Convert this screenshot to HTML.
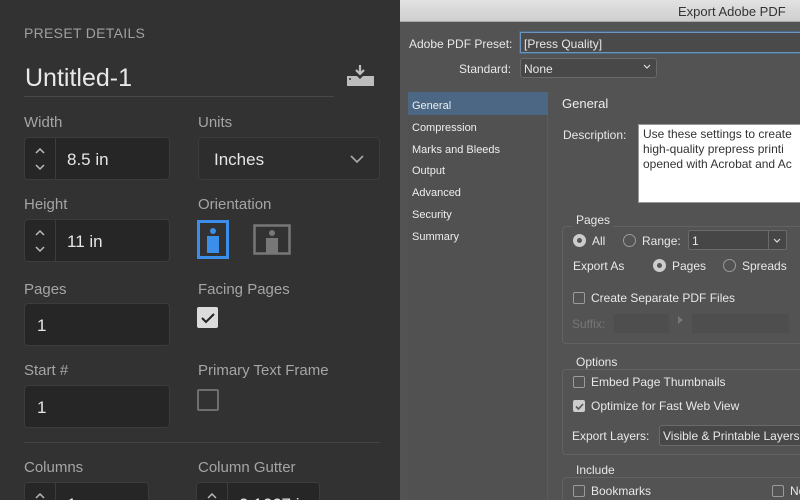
<!DOCTYPE html>
<html><head><style>
*{margin:0;padding:0;box-sizing:border-box}
html{width:800px;height:500px;overflow:hidden}
body{width:800px;height:500px;overflow:hidden;position:relative;background:#535353;font-family:"Liberation Sans",sans-serif}
.a{position:absolute;white-space:nowrap}
#L{position:absolute;left:0;top:0;width:400px;height:500px;background:#323232;overflow:hidden}
.lab{position:absolute;color:#a5a5a5;font-size:15px}
.box{position:absolute;background:#262626;border:1px solid #3c3c3c;border-radius:4px;color:#e6e6e6;font-size:17px}
.step{position:absolute;left:0;top:0;bottom:0;width:31px;border-right:1px solid #3c3c3c;color:#bbb}
.r{color:#e8e8e8;font-size:12px}
.cb{position:absolute;width:12px;height:12px;border:1px solid #9a9a9a;border-radius:2px;background:#535353}
.rd{position:absolute;width:13px;height:13px;border:1px solid #9a9a9a;border-radius:50%}
.rd.on{background:#ccc;border-color:#ccc}
.rd.on:after{content:"";position:absolute;left:3px;top:3px;width:5px;height:5px;border-radius:50%;background:#555}
.grp{position:absolute;border:1px solid #626262;border-radius:4px}
.leg{position:absolute;background:#535353;padding:0 3px;color:#e8e8e8;font-size:12px}
#R{position:absolute;left:400px;top:0;width:400px;height:500px;overflow:hidden}
</style></head><body>
<div id="L">
<div class="a" style="left:24px;top:25px;font-size:14px;color:#a0a0a0;letter-spacing:0.3px">PRESET DETAILS</div>
<div class="a" style="left:25px;top:64px;font-size:25px;color:#e8e8e8">Untitled-1</div>
<div class="a" style="left:24px;top:96px;width:310px;height:1px;background:#474747"></div>
<svg class="a" style="left:345px;top:64px" width="32" height="24" viewBox="0 0 32 24"><path d="M15 1v9M11 6l4 4 4-4" stroke="#bdbdbd" stroke-width="2.2" fill="none"/><path d="M2 12h10l3 3 3-3h11v10H2z" fill="#bdbdbd"/><circle cx="5" cy="15" r="1" fill="#323232"/></svg>

<div class="lab" style="left:24px;top:114px">Width</div>
<div class="lab" style="left:198px;top:114px">Units</div>
<div class="box" style="left:24px;top:137px;width:146px;height:43px"><div class="step"><svg width="31" height="41"><path d="M11 15l4-4 4 4M11 27l4 4 4-4" stroke="#bbb" stroke-width="1.5" fill="none"/></svg></div><span class="a" style="left:42px;top:12px">8.5 in</span></div>
<div class="box" style="left:198px;top:137px;width:182px;height:43px;background:#2d2d2d"><span class="a" style="left:15px;top:12px">Inches</span><svg class="a" style="left:151px;top:16px" width="14" height="10"><path d="M1 2l6 6 6-6" stroke="#aaa" stroke-width="1.6" fill="none"/></svg></div>

<div class="lab" style="left:24px;top:196px">Height</div>
<div class="lab" style="left:198px;top:196px">Orientation</div>
<div class="box" style="left:24px;top:219px;width:146px;height:43px"><div class="step"><svg width="31" height="41"><path d="M11 15l4-4 4 4M11 27l4 4 4-4" stroke="#bbb" stroke-width="1.5" fill="none"/></svg></div><span class="a" style="left:42px;top:12px">11 in</span></div>
<svg class="a" style="left:197px;top:220px" width="34" height="40"><rect x="1.5" y="1.5" width="29" height="36" fill="none" stroke="#3b8eea" stroke-width="3"/><circle cx="16" cy="11" r="3" fill="#3b8eea"/><path d="M10 16h12v17H10z" fill="#3b8eea"/></svg>
<svg class="a" style="left:253px;top:224px" width="38" height="32"><rect x="1.5" y="1.5" width="35" height="28" fill="none" stroke="#777" stroke-width="2.5"/><circle cx="19" cy="9" r="3" fill="#777"/><path d="M13 14h12v15H13z" fill="#777"/></svg>

<div class="lab" style="left:24px;top:281px">Pages</div>
<div class="lab" style="left:198px;top:281px">Facing Pages</div>
<div class="box" style="left:24px;top:303px;width:146px;height:43px"><span class="a" style="left:12px;top:12px">1</span></div>
<svg class="a" style="left:196px;top:306px" width="24" height="24"><rect x="1" y="1" width="21" height="21" rx="2" fill="#dcdcdc"/><path d="M6 12l4 4 8-8" stroke="#222" stroke-width="2" fill="none"/></svg>

<div class="lab" style="left:24px;top:362px">Start #</div>
<div class="lab" style="left:198px;top:362px">Primary Text Frame</div>
<div class="box" style="left:24px;top:385px;width:146px;height:43px"><span class="a" style="left:12px;top:12px">1</span></div>
<div class="a" style="left:197px;top:389px;width:22px;height:22px;border:2px solid #6e6e6e;border-radius:2px"></div>
<div class="a" style="left:24px;top:442px;width:356px;height:1px;background:#444"></div>

<div class="lab" style="left:24px;top:459px">Columns</div>
<div class="lab" style="left:198px;top:459px">Column Gutter</div>
<div class="box" style="left:24px;top:482px;width:125px;height:43px"><div class="step"><svg width="31" height="41"><path d="M11 15l4-4 4 4" stroke="#bbb" stroke-width="1.5" fill="none"/></svg></div><span class="a" style="left:42px;top:12px">1</span></div>
<div class="box" style="left:196px;top:482px;width:124px;height:43px"><div class="step"><svg width="31" height="41"><path d="M11 15l4-4 4 4" stroke="#bbb" stroke-width="1.5" fill="none"/></svg></div><span class="a" style="left:42px;top:12px">0.1667 in</span></div>
</div>

<div id="R">
<div class="a" style="left:0;top:0;width:400px;height:22px;background:linear-gradient(#e2e2e2,#cfcfcf);border-bottom:1px solid #aaa"></div>
<div class="a" style="left:278px;top:4px;font-size:13px;color:#333">Export Adobe PDF</div>

<div class="a r" style="left:9px;top:37px">Adobe PDF Preset:</div>
<div class="a" style="left:120px;top:32px;width:290px;height:21px;background:#4a4a4a;border:1px solid #6b96c0;box-shadow:0 0 0 1px #46698c"></div>
<div class="a r" style="left:124px;top:37px">[Press Quality]</div>
<div class="a r" style="left:59px;top:62px">Standard:</div>
<div class="a" style="left:120px;top:58px;width:137px;height:20px;background:#484848;border:1px solid #6a6a6a;border-radius:3px"></div>
<div class="a r" style="left:124px;top:62px">None</div>
<svg class="a" style="left:243px;top:64px" width="8" height="6"><path d="M1 1l3 3 3-3" stroke="#ddd" stroke-width="1.2" fill="none"/></svg>

<div class="a" style="left:8px;top:92px;width:140px;height:410px;background:#515151;border-right:1px solid #5c5c5c"></div>
<div class="a" style="left:8px;top:92px;width:140px;height:23px;background:#4b6784"></div>
<div class="a" style="left:12px;top:96px;font-size:11px;color:#eee;line-height:21.8px">General<br>Compression<br>Marks and Bleeds<br>Output<br>Advanced<br>Security<br>Summary</div>

<div class="a" style="left:162px;top:96px;font-size:13px;color:#eee">General</div>
<div class="a r" style="left:163px;top:128px">Description:</div>
<div class="a" style="left:238px;top:124px;width:170px;height:79px;background:#fff;border:1px solid #999"></div>
<div class="a" style="left:243px;top:127px;font-size:12px;color:#333;line-height:15px">Use these settings to create<br>high-quality prepress printi<br>opened with Acrobat and Ac</div>

<div class="grp" style="left:162px;top:226px;width:250px;height:118px"></div>
<div class="leg" style="left:173px;top:213px">Pages</div>
<div class="rd on" style="left:173px;top:234px"></div><div class="a r" style="left:192px;top:234px">All</div>
<div class="rd" style="left:223px;top:234px"></div><div class="a r" style="left:242px;top:234px">Range:</div>
<div class="a" style="left:288px;top:230px;width:99px;height:20px;background:#464646;border:1px solid #6a6a6a;border-radius:2px"></div>
<div class="a" style="left:368px;top:231px;width:1px;height:18px;background:#6a6a6a"></div>
<div class="a r" style="left:292px;top:234px">1</div>
<svg class="a" style="left:373px;top:238px" width="8" height="6"><path d="M1 1l3 3 3-3" stroke="#ddd" stroke-width="1.2" fill="none"/></svg>
<div class="a r" style="left:173px;top:259px">Export As</div>
<div class="rd on" style="left:253px;top:259px"></div><div class="a r" style="left:272px;top:259px">Pages</div>
<div class="rd" style="left:323px;top:259px"></div><div class="a r" style="left:342px;top:259px">Spreads</div>
<div class="cb" style="left:173px;top:292px"></div><div class="a r" style="left:191px;top:291px">Create Separate PDF Files</div>
<div class="a" style="left:172px;top:317px;font-size:12px;color:#777">Suffix:</div>
<div class="a" style="left:214px;top:314px;width:55px;height:19px;background:#4e4e4e"></div>
<div class="a" style="left:278px;top:316px;width:0;height:0;border-left:5px solid #777;border-top:4px solid transparent;border-bottom:4px solid transparent"></div>
<div class="a" style="left:292px;top:314px;width:97px;height:19px;background:#4e4e4e"></div>

<div class="grp" style="left:162px;top:369px;width:250px;height:86px"></div>
<div class="leg" style="left:173px;top:355px">Options</div>
<div class="cb" style="left:173px;top:376px"></div><div class="a r" style="left:191px;top:375px">Embed Page Thumbnails</div>
<div class="cb" style="left:173px;top:400px;background:#ccc;border-color:#ccc"></div>
<svg class="a" style="left:174px;top:401px" width="11" height="11"><path d="M2 5.5l2.5 2.5 4.5-5" stroke="#555" stroke-width="1.6" fill="none"/></svg>
<div class="a r" style="left:191px;top:399px">Optimize for Fast Web View</div>
<div class="a r" style="left:172px;top:429px">Export Layers:</div>
<div class="a" style="left:259px;top:425px;width:160px;height:21px;background:#484848;border:1px solid #6a6a6a;border-radius:3px"></div>
<div class="a r" style="left:263px;top:429px">Visible &amp; Printable Layers</div>

<div class="grp" style="left:162px;top:477px;width:250px;height:40px"></div>
<div class="leg" style="left:173px;top:463px">Include</div>
<div class="cb" style="left:173px;top:485px"></div><div class="a r" style="left:191px;top:484px">Bookmarks</div>
<div class="cb" style="left:372px;top:485px"></div><div class="a r" style="left:390px;top:484px">Non</div>
</div>
</body></html>
